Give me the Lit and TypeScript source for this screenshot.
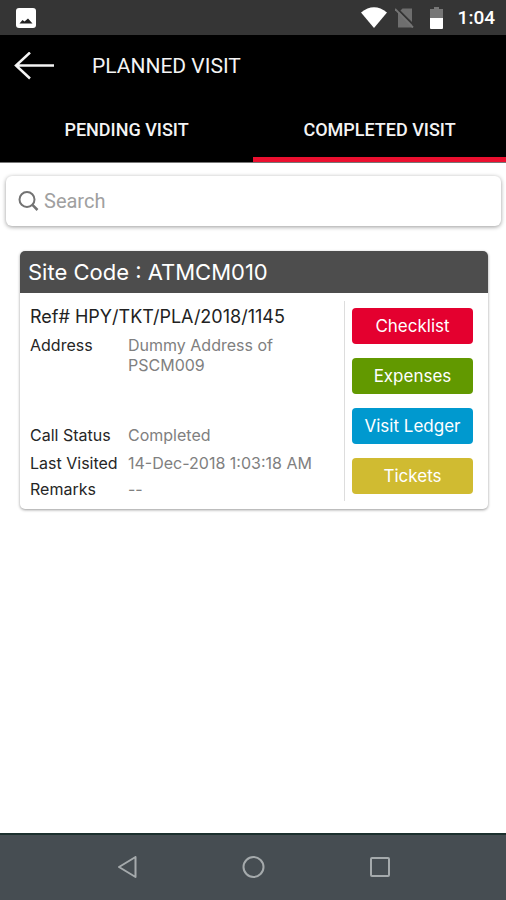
import { LitElement, html, css, svg } from "lit";
import { customElement, property, state } from "lit/decorators.js";
import { classMap } from "lit/directives/class-map.js";

interface Visit {
  siteCode: string;
  ref: string;
  address: string;
  status: string;
  lastVisited: string;
  remarks: string;
}

@customElement("status-bar")
class StatusBar extends LitElement {
  static styles = css`
    :host {
      display: flex;
      align-items: center;
      justify-content: space-between;
      box-sizing: border-box;
      height: 35px;
      padding: 0 11px 0 16px;
      background: #353535;
      color: #fff;
    }
    svg { display: block; }
    .right { display: flex; align-items: center; }
    .wifi { margin-right: 8px; }
    .sim { margin-right: 16px; }
    .battery { margin-right: 15px; }
    .time { font-size: 19px; line-height: 24px; font-weight: 500; }
  `;
  render() {
    return html`
      <svg width="20" height="20" viewBox="0 0 20 20" aria-hidden="true">
        <rect width="20" height="20" rx="3" fill="#fff" />
        <path d="M3.5 15.5 6.5 12 8.5 13.5 12 10.5 16.5 15.5Z" fill="#222" />
      </svg>
      <div class="right">
        <svg class="wifi" width="26" height="21" viewBox="0 0 26 21" aria-hidden="true">
          <path d="M0 5.5Q13-5 26 5.5L13 21Z" fill="#fff" />
        </svg>
        <svg class="sim" width="19" height="20" viewBox="0 0 19 20" aria-hidden="true">
          <path d="M7.5 0.5H17V19.5H3V5Z" fill="#6e6e6e" />
          <path d="M1.5 0 19 17.5" stroke="#353535" stroke-width="2" />
          <path d="M0 1 18 19.5" stroke="#747474" stroke-width="1.8" />
        </svg>
        <svg class="battery" width="13" height="22" viewBox="0 0 13 22" aria-hidden="true">
          <path d="M4 0H9V2H13V11H0V2H4Z" fill="#777" />
          <path d="M0 11H13V21a1 1 0 0 1-1 1H1a1 1 0 0 1-1-1Z" fill="#fff" />
        </svg>
        <span class="time">1:04</span>
      </div>
    `;
  }
}

@customElement("visit-card")
class VisitCard extends LitElement {
  @property({ attribute: false }) visit!: Visit;

  static styles = css`
    :host {
      display: block;
      border-radius: 5px;
      background: #fff;
      overflow: hidden;
      box-shadow: 0 1px 3px rgba(0, 0, 0, 0.4);
      font-family: Inter, "Open Sans", sans-serif;
    }
    h2 {
      margin: 0;
      padding: 0 8px;
      background: #4d4d4d;
      color: #fff;
      font-size: 22px;
      line-height: 42px;
      font-weight: 400;
    }
    .body { display: flex; padding: 8px 15px 8px 10px; }
    .details { flex: 1; min-width: 0; padding-top: 4px; }
    .ref {
      margin: 0 0 6px;
      font-size: 18px;
      line-height: 24px;
      color: #222;
    }
    dl {
      display: grid;
      grid-template-columns: 98px 1fr;
      grid-template-rows: 90px 28px 26px auto;
      margin: 0;
      font-size: 16px;
      line-height: 20px;
    }
    dt { color: #262626; white-space: nowrap; }
    dd { margin: 0; color: #808080; }
    .address { max-width: 160px; }
    .actions {
      display: flex;
      flex-direction: column;
      gap: 14px;
      flex: 0 0 121px;
      padding: 7px 0 7px 7px;
      border-left: 1px solid #ddd;
    }
    button {
      height: 36px;
      padding: 0;
      border: 0;
      border-radius: 4px;
      color: #fff;
      font: 400 17px/24px Inter, "Open Sans", sans-serif;
    }
    .checklist { background: #e4002f; }
    .expenses { background: #629900; }
    .ledger { background: #0099cf; }
    .tickets { background: #d0bb31; }
  `;

  render() {
    const v = this.visit;
    return html`
      <h2>Site Code : ${v.siteCode}</h2>
      <div class="body">
        <div class="details">
          <p class="ref">Ref# ${v.ref}</p>
          <dl>
            <dt>Address</dt><dd class="address">${v.address}</dd>
            <dt>Call Status</dt><dd>${v.status}</dd>
            <dt>Last Visited</dt><dd>${v.lastVisited}</dd>
            <dt>Remarks</dt><dd>${v.remarks}</dd>
          </dl>
        </div>
        <div class="actions">
          <button class="checklist">Checklist</button>
          <button class="expenses">Expenses</button>
          <button class="ledger">Visit Ledger</button>
          <button class="tickets">Tickets</button>
        </div>
      </div>
    `;
  }
}

@customElement("app-root")
class AppRoot extends LitElement {
  @state() private tab = "COMPLETED VISIT";

  private visits: Visit[] = [
    {
      siteCode: "ATMCM010",
      ref: "HPY/TKT/PLA/2018/1145",
      address: "Dummy Address of PSCM009",
      status: "Completed",
      lastVisited: "14-Dec-2018 1:03:18 AM",
      remarks: "--",
    },
  ];

  static styles = css`
    :host {
      display: flex;
      flex-direction: column;
      min-height: 100vh;
      background: #fff;
      font-family: Roboto, sans-serif;
    }
    svg { display: block; }
    button {
      margin: 0;
      padding: 0;
      border: 0;
      background: none;
      color: inherit;
      font-family: inherit;
    }
    header { background: #000; color: #f4f4f4; border-bottom: 1px solid #777; }
    .title { display: flex; align-items: center; gap: 37px; height: 62px; padding: 0 14px; }
    h1 { margin: 0; font-size: 21px; line-height: 28px; font-weight: 400; }
    .tabs { display: grid; grid-template-columns: 1fr 1fr; }
    .tab {
      height: 65px;
      padding-top: 6px;
      border-bottom: 5px solid transparent;
      font-size: 18px;
      line-height: 24px;
      font-weight: 500;
    }
    .tab.active { border-bottom-color: #ec0f2f; }
    main { flex: 1; padding: 13px 5px 24px 6px; }
    .search {
      display: flex;
      align-items: center;
      gap: 5px;
      height: 50px;
      padding: 0 12px;
      border-radius: 6px;
      background: #fff;
      box-shadow: 0 1px 4px rgba(0, 0, 0, 0.4);
    }
    .search input {
      flex: 1;
      min-width: 0;
      padding: 0;
      border: 0;
      outline: 0;
      background: none;
      font: 400 20px/26px Roboto, sans-serif;
      color: #333;
    }
    .search input::placeholder { color: #a0a0a0; opacity: 1; }
    .list { display: grid; gap: 16px; margin: 25px 13px 0 14px; }
    .system {
      display: flex;
      align-items: center;
      justify-content: center;
      gap: 102px;
      height: 65px;
      border-top: 2px solid #1c302e;
      background: #464d52;
    }
  `;

  private renderTab(label: string) {
    const active = this.tab === label;
    return html`<button
      role="tab"
      aria-selected=${active ? "true" : "false"}
      class=${classMap({ tab: true, active })}
      @click=${() => (this.tab = label)}
    >${label}</button>`;
  }

  private navButton(label: string, shape: unknown) {
    return html`<button aria-label=${label}>
      <svg width="24" height="24" viewBox="0 0 24 24" fill="none" stroke="#a5aaac" stroke-width="2" stroke-linejoin="round">${shape}</svg>
    </button>`;
  }

  render() {
    return html`
      <status-bar></status-bar>
      <header>
        <div class="title">
          <button aria-label="Back">
            <svg width="41" height="28" viewBox="0 0 41 28" fill="none" stroke="#f4f4f4" stroke-width="2.5">
              <path d="M16 0.5 2 13.5 16 26.5M2 13.5H40" />
            </svg>
          </button>
          <h1>PLANNED VISIT</h1>
        </div>
        <div class="tabs" role="tablist">
          ${this.renderTab("PENDING VISIT")}${this.renderTab("COMPLETED VISIT")}
        </div>
      </header>
      <main>
        <label class="search">
          <svg width="21" height="21" viewBox="0 0 21 21" fill="none" stroke="#737373" stroke-width="2" aria-hidden="true">
            <circle cx="9" cy="8.5" r="7.5" />
            <path d="M14.2 13.7 19.5 19" stroke-width="2.5" />
          </svg>
          <input type="text" placeholder="Search" aria-label="Search" />
        </label>
        <div class="list">
          ${this.visits.map((v) => html`<visit-card .visit=${v}></visit-card>`)}
        </div>
      </main>
      <nav class="system" aria-label="System">
        ${this.navButton("Back", svg`<path d="M4 11 20.5 1V21Z" />`)}
        ${this.navButton("Home", svg`<circle cx="12.5" cy="11" r="10" />`)}
        ${this.navButton("Recent apps", svg`<rect x="4" y="2" width="18" height="18" rx="1" />`)}
      </nav>
    `;
  }
}
